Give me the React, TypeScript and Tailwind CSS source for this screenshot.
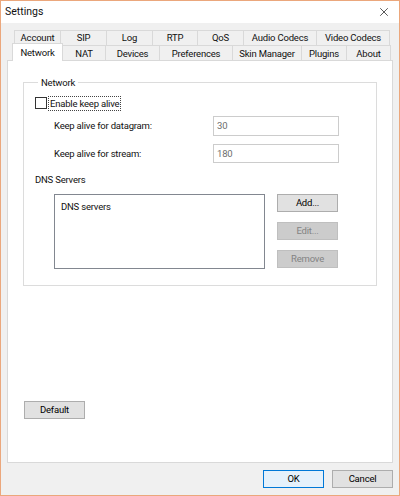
import { X } from 'lucide-react';

const font = { fontFamily: 'Roboto, "Noto Sans", sans-serif' };

const topRow = [
  { label: 'Account', w: 'w-[46px]' },
  { label: 'SIP', w: 'w-[46px]' },
  { label: 'Log', w: 'w-[46px]' },
  { label: 'RTP', w: 'w-[45px]' },
  { label: 'QoS', w: 'w-[46px]' },
  { label: 'Audio Codecs', w: 'w-[73px]' },
  { label: 'Video Codecs', w: 'w-[74px]' },
];

const bottomRow = [
  { label: 'NAT', w: 'w-[43px]' },
  { label: 'Devices', w: 'w-[54px]' },
  { label: 'Preferences', w: 'w-[73px]' },
  { label: 'Skin Manager', w: 'w-[69px]' },
  { label: 'Plugins', w: 'w-[45px]' },
  { label: 'About', w: 'w-[44px]' },
];

function Btn({ label, disabled, primary, className = '' }: { label: string; disabled?: boolean; primary?: boolean; className?: string }) {
  const look = disabled
    ? 'bg-[#cccccc] border-[#bfbfbf] text-[#838383]'
    : primary
      ? 'bg-[#e5f1fb] border-[#0078d7] text-black'
      : 'bg-[#e1e1e1] border-[#adadad] text-black';
  return (
    <div className={`flex h-[18px] w-[61px] items-center justify-center border ${look} ${className}`}>
      {label}
    </div>
  );
}

export default function App() {
  return (
    <div style={font} className="flex h-[496px] w-[400px] flex-col whitespace-nowrap border border-[#eba77c] bg-[#f0f0f0] text-[9.5px] leading-none tracking-[-0.2px] text-[#111111]">
      {/* title bar */}
      <div className="flex h-[22px] items-center justify-between bg-white pl-[4px] pr-[8px]">
        <span className="text-[10.5px] tracking-normal">Settings</span>
        <X className="h-[14px] w-[14px]" strokeWidth={1.2} />
      </div>

      <div className="flex flex-1 flex-col px-[6px] pt-[7px]">
        {/* tab strip */}
        <div className="flex h-[15px] pl-[7px]">
          {topRow.map((t) => (
            <div key={t.label} className={`${t.w} flex items-center justify-center border-t border-l border-[#d9d9d9] last:border-r`}>
              {t.label}
            </div>
          ))}
        </div>
        <div className="relative z-10 -mb-px flex h-[16px] pl-[5px]">
          <div className="-mt-[2px] flex h-[18px] w-[51px] items-center justify-center border border-b-0 border-[#d9d9d9] bg-white">
            Network
          </div>
          {bottomRow.map((t) => (
            <div key={t.label} className={`${t.w} flex items-center justify-center border-t border-r border-[#d9d9d9]`}>
              {t.label}
            </div>
          ))}
        </div>

        {/* Network page */}
        <div className="flex flex-1 flex-col border border-[#d9d9d9] bg-white px-[15px] pt-[17px]">
          <fieldset className="h-[208px] w-[354px] border border-[#dcdcdc] pl-[11px]">
            <legend className="ml-[3px] px-[3px]">Network</legend>
            <div className="mt-[8px] flex items-center">
              <div className="h-[12px] w-[12px] border border-[#333333] bg-white" />
              <span className="ml-px border border-dotted border-[#444444] px-px py-[2px]">Enable keep alive</span>
            </div>
            <div className="mt-[5px] flex items-center pl-[19px]">
              <span className="w-[159px]">Keep alive for datagram:</span>
              <div className="flex h-[20px] w-[126px] items-center border border-[#cccccc] px-[3px] text-[#6d6d6d]">30</div>
            </div>
            <div className="mt-[8px] flex items-center pl-[19px]">
              <span className="w-[159px]">Keep alive for stream:</span>
              <div className="flex h-[19px] w-[126px] items-center border border-[#cccccc] px-[3px] text-[#6d6d6d]">180</div>
            </div>
            <div className="mt-[12px]">DNS Servers</div>
            <div className="mt-[9px] flex pl-[19px]">
              <div className="h-[75px] w-[211px] border border-[#828790] pl-[6px] pt-[7px]">DNS servers</div>
              <div className="ml-[12px] flex flex-col gap-[10px]">
                <Btn label="Add..." />
                <Btn label="Edit..." disabled />
                <Btn label="Remove" disabled />
              </div>
            </div>
          </fieldset>
          <div className="flex-1" />
          <Btn label="Default" className="mb-[43px] ml-[1px]" />
        </div>
      </div>

      {/* dialog buttons */}
      <div className="flex h-[32px] items-center justify-end gap-[8px] pr-[6px]">
        <Btn label="OK" primary />
        <Btn label="Cancel" />
      </div>
    </div>
  );
}
